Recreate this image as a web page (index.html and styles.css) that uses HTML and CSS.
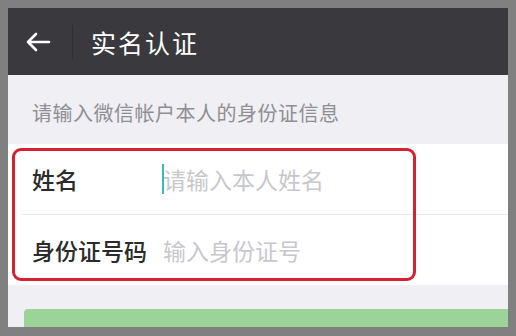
FILE: index.html
```html
<!DOCTYPE html>
<html lang="zh-CN">
<head>
  <meta charset="UTF-8" />
  <meta name="viewport" content="width=device-width, initial-scale=1.0" />
  <title>实名认证</title>
  <link rel="stylesheet" href="styles.css">
</head>
<body>
<div class="screen">
  <!-- Top bar -->
  <header class="topbar">
    <span class="back">
      <svg width="26" height="20" viewBox="0 0 26 20">
        <path d="M24 10H3M11 2L3 10L11 18" fill="none" stroke="#fff" stroke-width="2.6" stroke-linecap="round" stroke-linejoin="round"/>
      </svg>
    </span>
    <span class="sep"></span>
    <h1>实名认证</h1>
  </header>

  <p class="hint">请输入微信帐户本人的身份证信息</p>

  <!-- Form -->
  <section class="form">
    <div class="row">
      <label>姓名</label>
      <span class="field"><i class="caret"></i>请输入本人姓名</span>
    </div>
    <div class="row">
      <label>身份证号码</label>
      <span class="field">输入身份证号</span>
    </div>
    <div class="mark"></div>
  </section>

  <div class="next"></div>
</div>
</body>
</html>
```

FILE: styles.css
```css
/* Global */
body {
  margin: 0;
  padding: 8px 8px 0 8px;
  background: #808080;
  font-family: "Noto Sans CJK SC", "Noto Sans", sans-serif;
  height: 336px;
  box-sizing: border-box;
  overflow: hidden;
}
.screen {
  width: 500px;
  height: 319px;
  background: #efeff4;
  overflow: hidden;
}
/* Top bar */
.topbar {
  display: flex;
  align-items: center;
  height: 67px;
  background: #3a393e;
  color: #fff;
}
.back {
  display: flex;
  margin-left: 17px;
  width: 26px;
}
.sep {
  width: 1px;
  height: 34px;
  background: #2f2e33;
  margin-left: 21px;
}
.topbar h1 {
  margin: 0 0 0 18px;
  font-size: 25px;
  font-weight: normal;
  letter-spacing: 2px;
}
/* Hint */
.hint {
  margin: 0;
  height: 69px;
  box-sizing: border-box;
  padding: 24px 0 0 24px;
  font-size: 20px;
  line-height: 28px;
  letter-spacing: 0.5px;
  color: #8e8e93;
}
/* Form */
.form {
  position: relative;
  background: #fff;
}
.row {
  display: flex;
  align-items: center;
  height: 70px;
  padding-left: 24px;
  font-size: 23px;
}
.row + .row {
  border-top: 1px solid #e8e8ea;
  margin-left: 14px;
  padding-left: 10px;
}
.row label {
  width: 131px;
  color: #2b2b2b;
  font-weight: 500;
}
.field {
  position: relative;
  color: #c8c8cc;
}
.caret {
  position: absolute;
  left: -1px;
  top: 2px;
  width: 2px;
  height: 30px;
  background: #3cb8b8;
}
/* Red annotation box */
.mark {
  position: absolute;
  left: 4px;
  top: 4px;
  width: 404px;
  height: 133px;
  border: 3px solid #d42232;
  border-radius: 9px;
  box-sizing: border-box;
}
/* Button */
.next {
  margin: 24px 0 0 16px;
  height: 30px;
  background: #9cd399;
  border-radius: 4px 0 0 0;
}
```
